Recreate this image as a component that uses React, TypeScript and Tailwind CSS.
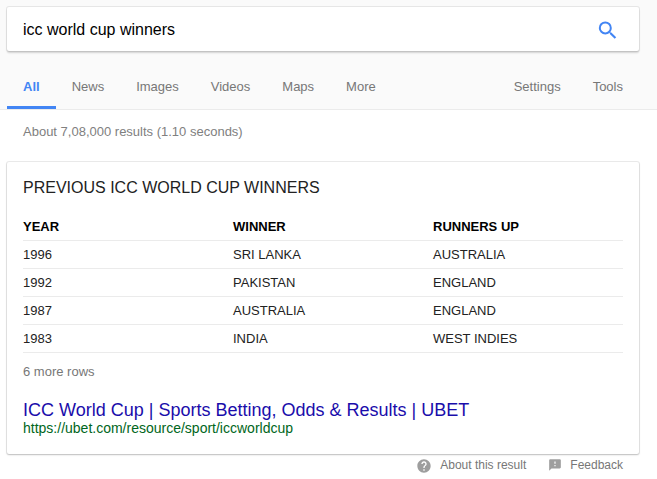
const tabs = ["All", "News", "Images", "Videos", "Maps", "More"];
const tools = ["Settings", "Tools"];
const rows = [
  ["1996", "SRI LANKA", "AUSTRALIA"],
  ["1992", "PAKISTAN", "ENGLAND"],
  ["1987", "AUSTRALIA", "ENGLAND"],
  ["1983", "INDIA", "WEST INDIES"],
];

function SearchBar() {
  return (
    <form
      role="search"
      onSubmit={(e) => e.preventDefault()}
      className="ml-[7px] mr-[18px] flex h-11 items-center rounded-[2px] bg-white pt-px pl-4 pr-5 shadow-[0_2px_2px_0_rgba(0,0,0,0.16),0_0_0_1px_rgba(0,0,0,0.08)]"
    >
      <input
        type="text"
        aria-label="Search"
        defaultValue="icc world cup winners"
        className="min-w-0 flex-1 bg-transparent pt-px text-base text-black outline-none"
      />
      <button type="submit" aria-label="Search" className="text-[#4285f4]">
        <svg viewBox="0 0 24 24" className="size-6" fill="currentColor" aria-hidden="true">
          <path d="M16.32 14.43h-.79l-.28-.27A6.47 6.47 0 0 0 16.8 9.9 6.5 6.5 0 1 0 10.3 16.4c1.61 0 3.09-.59 4.23-1.57l.27.28v.79l4.9 4.9 1.5-1.5-4.88-4.87zm-6.02 0a4.5 4.5 0 1 1 0-9 4.5 4.5 0 0 1 0 9z" />
        </svg>
      </button>
    </form>
  );
}

function Navigation() {
  return (
    <nav className="mt-4 ml-[7px] mr-[18px] flex justify-between text-[13px] leading-[39px] text-[#777]">
      <div className="flex">
        {tabs.map((tab, i) => (
          <a
            key={tab}
            href="#"
            aria-current={i === 0 ? "page" : undefined}
            className={
              i === 0
                ? "border-b-[3px] border-[#4285f4] px-4 font-bold text-[#4285f4]"
                : "border-b-[3px] border-transparent px-4"
            }
          >
            {tab}
          </a>
        ))}
      </div>
      <div className="flex">
        {tools.map((tool) => (
          <a key={tool} href="#" className="px-4">
            {tool}
          </a>
        ))}
      </div>
    </nav>
  );
}

function ResultCard() {
  return (
    <section className="mt-5 rounded-[2px] bg-white px-4 pt-4 pb-[18px] shadow-[0_1px_2px_0_rgba(0,0,0,0.2),0_0_0_1px_rgba(0,0,0,0.08)]">
      <h2 className="text-base leading-5 text-[#222]">PREVIOUS ICC WORLD CUP WINNERS</h2>
      <table className="mt-[15px] w-full table-fixed border-collapse text-left text-[13px] leading-[19px] text-[#222]">
        <colgroup>
          <col className="w-[35%]" />
          <col className="w-1/3" />
          <col />
        </colgroup>
        <thead>
          <tr className="border-b border-[#ebebeb] text-black">
            <th className="py-1 font-bold">YEAR</th>
            <th className="py-1 font-bold">WINNER</th>
            <th className="py-1 font-bold">RUNNERS UP</th>
          </tr>
        </thead>
        <tbody>
          {rows.map((row) => (
            <tr key={row[0]} className="border-b border-[#ebebeb]">
              {row.map((cell, i) => (
                <td key={i} className="py-1">
                  {cell}
                </td>
              ))}
            </tr>
          ))}
        </tbody>
      </table>
      <a href="#" className="mt-[9px] block text-[13px] leading-5 text-[#777]">
        6 more rows
      </a>
      <h3 className="mt-[18px] text-lg leading-5">
        <a href="#" className="text-[#1a0dab]">
          ICC World Cup | Sports Betting, Odds &amp; Results | UBET
        </a>
      </h3>
      <cite className="block text-sm leading-4 text-[#006621] not-italic">
        https://ubet.com/resource/sport/iccworldcup
      </cite>
    </section>
  );
}

function CardFooter() {
  return (
    <footer className="mt-[3px] flex justify-end gap-[22px] pr-4 text-xs leading-4 text-[#777]">
      <a href="#" className="flex gap-2">
        <svg viewBox="0 0 24 24" className="mt-px size-4 fill-[#9e9e9e]" aria-hidden="true">
          <path d="M12 2C6.48 2 2 6.48 2 12s4.48 10 10 10 10-4.48 10-10S17.52 2 12 2zm1 17h-2v-2h2v2zm2.07-7.75l-.9.92C13.45 12.9 13 13.5 13 15h-2v-.5c0-1.1.45-2.1 1.17-2.83l1.24-1.26c.37-.36.59-.86.59-1.41 0-1.1-.9-2-2-2s-2 .9-2 2H8c0-2.21 1.79-4 4-4s4 1.79 4 4c0 .88-.36 1.68-.93 2.25z" />
        </svg>
        About this result
      </a>
      <a href="#" className="flex gap-2">
        <svg viewBox="0 0 24 24" className="mt-px size-3.5 fill-[#9e9e9e]" aria-hidden="true">
          <path d="M20 2H4c-1.1 0-1.99.9-1.99 2L2 22l4-4h14c1.1 0 2-.9 2-2V4c0-1.1-.9-2-2-2zm-7 12h-2v-2h2v2zm0-4h-2V6h2v4z" />
        </svg>
        Feedback
      </a>
    </footer>
  );
}

export default function App() {
  return (
    <div className="min-h-screen bg-white font-['Liberation_Sans',Arial,sans-serif]">
      <header className="border-b border-[#ebebeb] bg-[#fafafa] pt-[7px]">
        <SearchBar />
        <Navigation />
      </header>
      <main className="ml-[7px] mr-[18px]">
        <p className="px-4 pt-3 text-[13px] leading-5 text-[#808080]">
          About 7,08,000 results (1.10 seconds)
        </p>
        <ResultCard />
        <CardFooter />
      </main>
    </div>
  );
}
